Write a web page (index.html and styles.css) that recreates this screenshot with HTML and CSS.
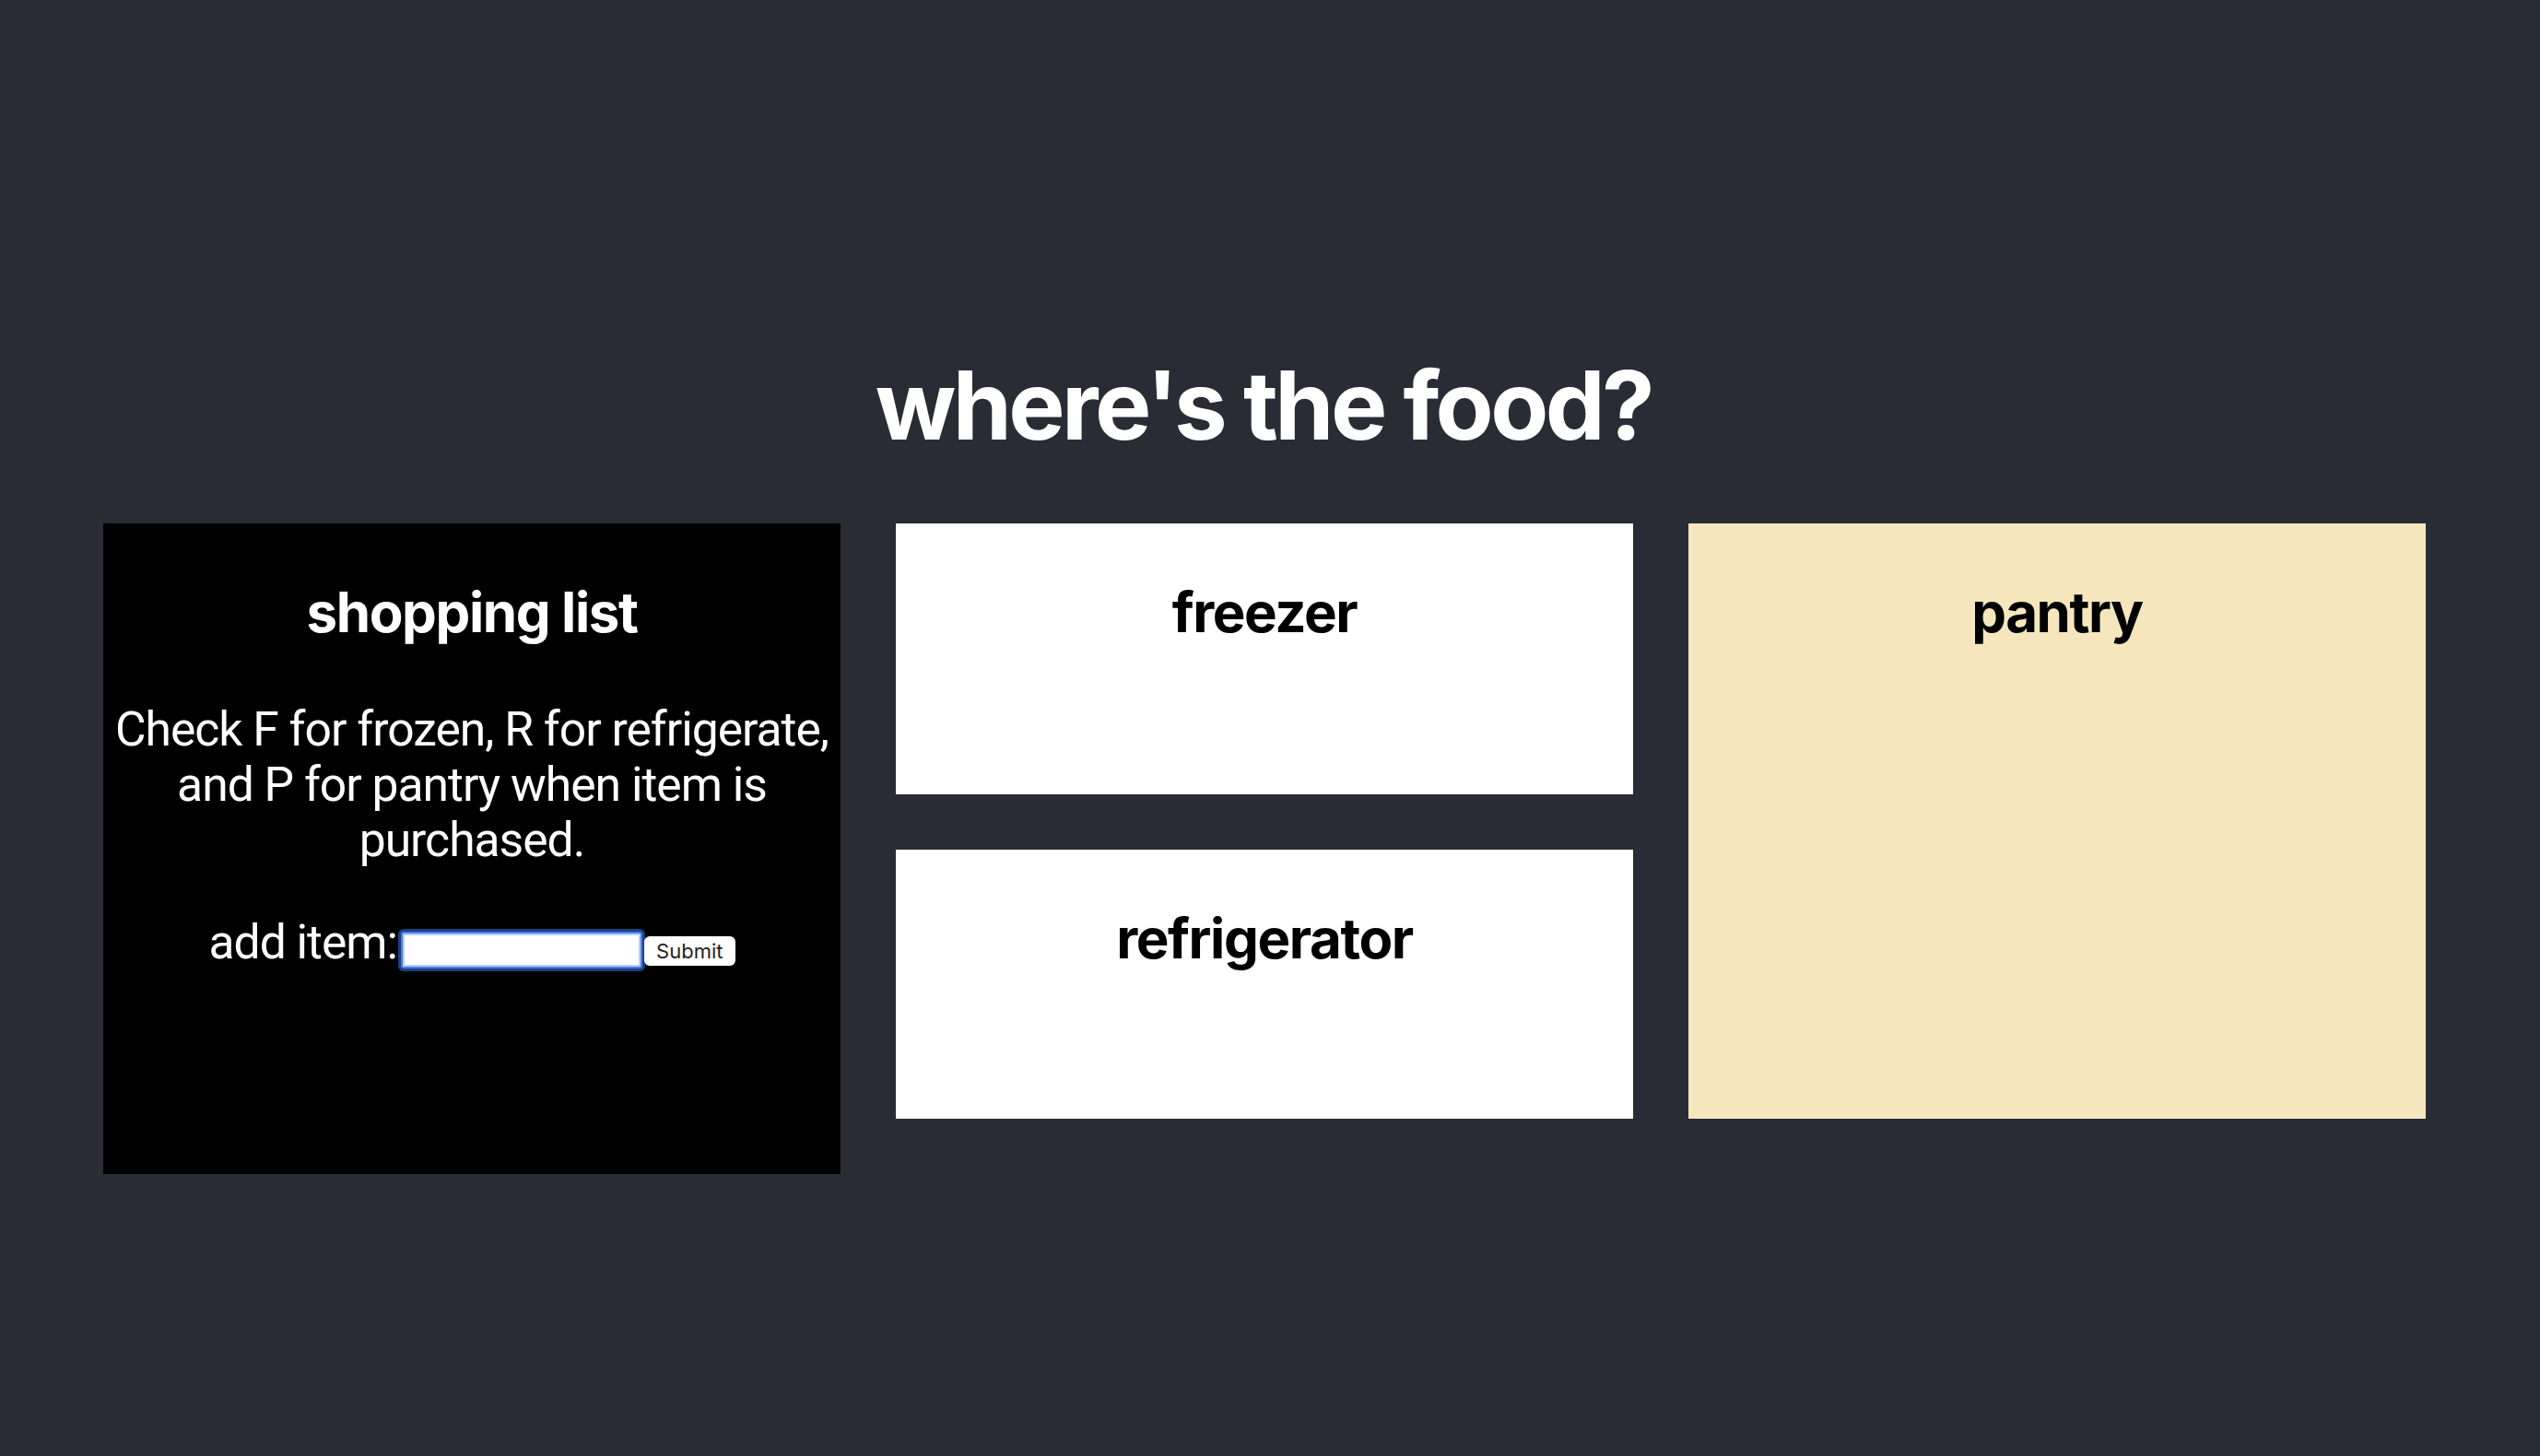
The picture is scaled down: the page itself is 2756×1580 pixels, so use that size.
FILE: index.html
```html
<!DOCTYPE html>
<html lang="en">
<head>
<meta charset="utf-8">
<title>where's the food?</title>
<link rel="stylesheet" href="styles.css">
</head>
<body>
<div class="app">
  <h1 class="title">where's the food?</h1>
  <div class="boards">
    <section class="box box-list">
      <h3 class="box-title">shopping list</h3>
      <p class="hint">Check F for frozen, R for refrigerate, and P for pantry when item is purchased.</p>
      <form class="add-form">
        <label class="add-label" for="item">add item:</label><input id="item" class="add-input" type="text"><button class="add-btn" type="button">Submit</button>
      </form>
    </section>
    <div class="stack">
      <section class="box box-white box-freezer">
        <h3 class="box-title">freezer</h3>
      </section>
      <section class="box box-white box-fridge">
        <h3 class="box-title">refrigerator</h3>
      </section>
    </div>
    <section class="box box-pantry">
      <h3 class="box-title">pantry</h3>
    </section>
  </div>
</div>
</body>
</html>
```

FILE: styles.css
```css
html, body {
  margin: 0;
  padding: 0;
  background: #292c34;
}
body {
  width: 2756px;
  height: 1580px;
  overflow: hidden;
  font-family: "Inter", "Noto Sans", sans-serif;
  font-size: 51.6px;
}
.app {
  display: flex;
  flex-direction: column;
  padding-top: 378px;
}
.title {
  margin: 0 0 66px 0;
  padding-right: 14px;
  height: 124px;
  line-height: 124px;
  font-size: 103px;
  font-weight: 700;
  color: #ffffff;
  text-align: center;
  letter-spacing: -3.6px;
}
.boards {
  display: flex;
  align-items: flex-start;
  gap: 60px;
  padding-left: 112px;
}
.stack {
  display: flex;
  flex-direction: column;
  gap: 60px;
}
.box {
  width: 800px;
  box-sizing: border-box;
  text-align: center;
  overflow: hidden;
}
.box-title {
  margin: 60px 0 0 0;
  font-size: 60px;
  line-height: 72px;
  font-weight: 700;
  letter-spacing: -1.4px;
}
.box-list {
  background: #000000;
  color: #ffffff;
  height: 706px;
}
.box-white {
  background: #ffffff;
  color: #000000;
}
.box-freezer { height: 294px; }
.box-fridge { height: 292px; }
.box-pantry {
  background: #f5e6bd;
  color: #000000;
  height: 646px;
}
.hint {
  margin: 62px 0 49px 0;
  font-family: "Roboto", "Inter", sans-serif;
  font-size: 51.6px;
  line-height: 60px;
  letter-spacing: -1px;
}
.add-form {
  margin: 0;
  line-height: 60px;
  font-size: 51.6px;
}
.add-label {
  font-family: "Roboto", "Inter", sans-serif;
  letter-spacing: -1px;
}
.add-input {
  box-sizing: border-box;
  width: 262px;
  height: 40px;
  margin: 0 2px 0 4px;
  padding: 0;
  border: 2px solid #4a7be0;
  border-radius: 3px;
  background: #ffffff;
  box-shadow: inset 0 0 0 2px #b9cef7, 0 0 0 3px #1d3f86;
  vertical-align: 5px;
  outline: none;
}
.add-btn {
  box-sizing: border-box;
  height: 32px;
  padding: 0 13px;
  border: none;
  border-radius: 6px;
  background: #ffffff;
  color: #222222;
  font-family: "Inter", "Noto Sans", sans-serif;
  font-size: 22px;
  vertical-align: 0px;
}
```
